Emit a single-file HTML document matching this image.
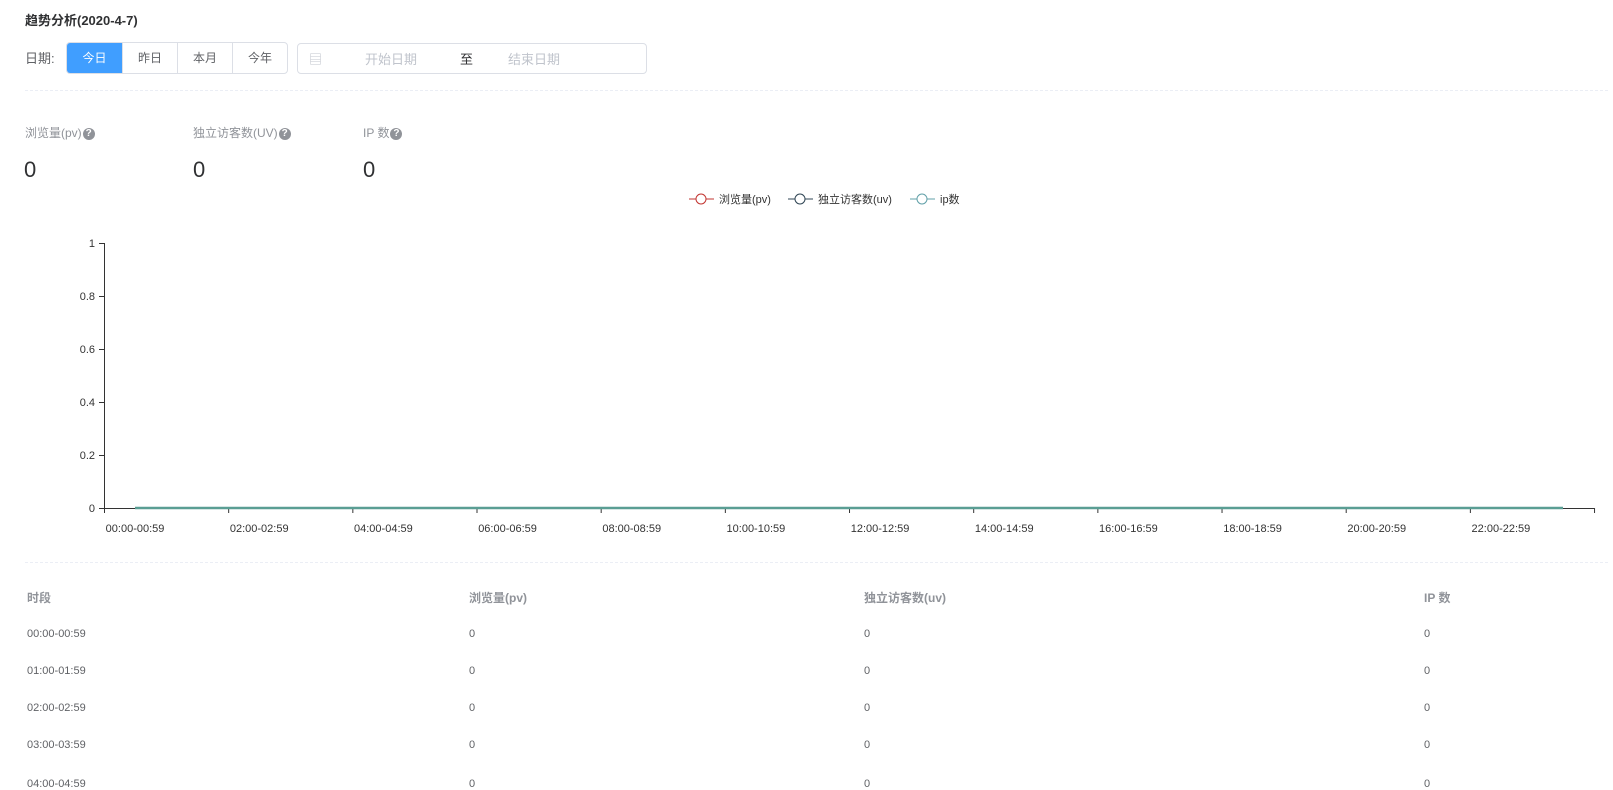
<!DOCTYPE html>
<html><head><meta charset="utf-8"><style>
*{margin:0;padding:0;box-sizing:border-box}
body{width:1613px;height:778px;overflow:hidden;background:#fff;font-family:"Liberation Sans","Noto Sans CJK SC",sans-serif;color:#606266;position:relative}
.a{position:absolute;white-space:nowrap}
.title{left:25px;top:10px;font-size:13px;font-weight:bold;color:#303133}
.lbl{left:25px;top:48px;font-size:13px;color:#606266}
.btns{left:66px;top:42px;height:32px;display:flex;border:1px solid #dcdfe6;border-radius:4px;overflow:hidden}
.btns div{width:55px;text-align:center;line-height:30px;font-size:12px;color:#606266;border-left:1px solid #dcdfe6}
.btns div:first-child{border-left:none;background:#409eff;color:#fff}
.picker{left:297px;top:43px;width:350px;height:31px;border:1px solid #dcdfe6;border-radius:4px;font-size:13px;color:#c0c4cc}
.dash{left:25px;width:1583px;height:0;border-top:1px dashed #ebeef5}
.sl{font-size:12px;color:#909399;top:124px}
.q{display:inline-block;width:12px;height:12px;border-radius:50%;background:#909399;color:#fff;font-size:10px;line-height:12px;text-align:center;font-weight:bold;vertical-align:1px;margin-left:1px}
.num{font-size:22px;color:#303133;top:157px}
.th{font-size:12px;color:#909399;font-weight:bold;top:589px}
.td{font-size:11px;color:#606266}
</style></head><body>
<div class="a title">趋势分析(2020-4-7)</div>
<div class="a lbl">日期:</div>
<div class="a btns"><div>今日</div><div>昨日</div><div>本月</div><div>今年</div></div>
<div class="a picker">
 <span class="a" style="left:11px;top:5px">▤</span>
 <span class="a" style="left:67px;top:5px">开始日期</span>
 <span class="a" style="left:162px;top:5px;color:#303133">至</span>
 <span class="a" style="left:210px;top:5px">结束日期</span>
</div>
<div class="a dash" style="top:90px"></div>
<div class="a sl" style="left:25px">浏览量(pv)<span class="q">?</span></div>
<div class="a sl" style="left:193px">独立访客数(UV)<span class="q">?</span></div>
<div class="a sl" style="left:363px">IP 数<span class="q">?</span></div>
<div class="a num" style="left:24px">0</div>
<div class="a num" style="left:193px">0</div>
<div class="a num" style="left:363px">0</div>
<svg class="a" style="left:0;top:0" width="1613" height="560">
<g font-size="11" fill="#333" font-family="Liberation Sans,Noto Sans CJK SC,sans-serif">
 <g stroke-width="1" fill="#fff">
  <line x1="689" y1="199" x2="714" y2="199" stroke="#c23531"/><circle cx="701" cy="199" r="5" stroke="#c23531"/>
  <line x1="788" y1="199" x2="813" y2="199" stroke="#2f4554"/><circle cx="800" cy="199" r="5" stroke="#2f4554"/>
  <line x1="910" y1="199" x2="935" y2="199" stroke="#61a0a8"/><circle cx="922" cy="199" r="5" stroke="#61a0a8"/>
 </g>
 <text x="719" y="203">浏览量(pv)</text>
 <text x="818" y="203">独立访客数(uv)</text>
 <text x="940" y="203">ip数</text>
 <line x1="104.5" y1="243" x2="104.5" y2="508" stroke="#333"/>
 <line x1="104" y1="508.5" x2="1594" y2="508.5" stroke="#333"/>
 <g stroke="#333">
  <line x1="99" y1="243.5" x2="104" y2="243.5"/><line x1="99" y1="296.5" x2="104" y2="296.5"/><line x1="99" y1="349.5" x2="104" y2="349.5"/><line x1="99" y1="402.5" x2="104" y2="402.5"/><line x1="99" y1="455.5" x2="104" y2="455.5"/><line x1="99" y1="508.5" x2="104" y2="508.5"/>
 </g>
 <g text-anchor="end">
  <text x="95" y="247">1</text><text x="95" y="300">0.8</text><text x="95" y="353">0.6</text><text x="95" y="406">0.4</text><text x="95" y="459">0.2</text><text x="95" y="512">0</text>
 </g>
 <g stroke="#333" id="ticks"></g>
 <line x1="135" y1="508" x2="1563" y2="508" stroke="#5a9e94" stroke-width="2.5"/>
 <g text-anchor="middle" id="xl"></g>
</g>
</svg>
<script>
var s="",t="",st=124.17;
for(var i=0;i<=12;i++){var x=104+i*st;s+='<line x1="'+(x+.5)+'" y1="508" x2="'+(x+.5)+'" y2="513" stroke="#333"/>';}
for(var i=0;i<12;i++){var h=("0"+(i*2)).slice(-2);var x=104+i*st+st/4;t+='<text x="'+x+'" y="532">'+h+':00-'+h+':59</text>';}
document.getElementById("ticks").innerHTML=s;document.getElementById("xl").innerHTML=t;
</script>
<div class="a dash" style="top:562px"></div>
<div class="a th" style="left:27px">时段</div>
<div class="a th" style="left:469px">浏览量(pv)</div>
<div class="a th" style="left:864px">独立访客数(uv)</div>
<div class="a th" style="left:1424px">IP 数</div>
<div id="rows"></div>
<script>
var r="",ys=[628,665,702,739,778];
for(var i=0;i<5;i++){var h=("0"+i).slice(-2);var y=ys[i];
r+='<div class="a td" style="left:27px;top:'+y+'px">'+h+':00-'+h+':59</div><div class="a td" style="left:469px;top:'+y+'px">0</div><div class="a td" style="left:864px;top:'+y+'px">0</div><div class="a td" style="left:1424px;top:'+y+'px">0</div>';}
document.getElementById("rows").innerHTML=r;
</script>
</body></html>
